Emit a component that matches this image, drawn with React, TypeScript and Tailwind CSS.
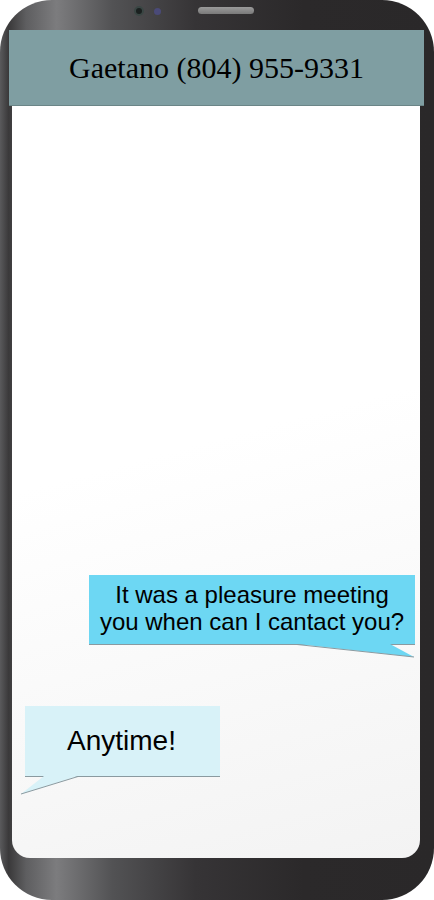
export default function App() {
  return (
    <div className="w-[434px] h-[900px] bg-white overflow-hidden">
      <div className="relative w-[434px] h-[900px] rounded-[52px] bg-[linear-gradient(to_right,#5a5a5c_0%,#3a393a_2%,#5e5e60_6%,#7c7c7e_13%,#525254_26%,#363436_45%,#2b292a_70%,#2a2829_100%)] flex flex-col pb-[42px]">
        {/* notch: camera + speaker */}
        <div className="h-[30px] flex items-start pt-[6px]">
          <div className="ml-[134px] w-[10px] h-[10px] rounded-full bg-[#1a201f] border-2 border-[#3a4644]" />
          <div className="ml-[10px] mt-[2px] w-[7px] h-[7px] rounded-full bg-[#4a4a78]" />
          <div className="ml-[37px] mt-[1px] w-[56px] h-[7px] rounded-full bg-[linear-gradient(to_bottom,#9a9a9a,#7a7a7a)]" />
        </div>

        {/* header */}
        <div className="ml-[9px] mr-[10px] h-[76px] bg-[#7f9ea2] border-b border-[#6b8587] flex items-center justify-center pt-[1px]">
          <span className="font-['Liberation_Serif',serif] text-[30px] text-black leading-none">
            Gaetano (804) 955-9331
          </span>
        </div>

        {/* screen */}
        <div className="ml-[12px] mr-[14px] flex-1 rounded-b-[18px] bg-[linear-gradient(165deg,#ffffff_45%,#f3f3f3_100%)] flex flex-col justify-end pb-[81px] font-['Liberation_Sans',Arial,sans-serif]">
          <div className="relative self-end mr-[5px] w-[326px] h-[70px] bg-[#6dd7f3] border-b border-[#8a9aa0] flex flex-col items-center justify-center pb-[3px] text-[24px] leading-[27px] text-black">
            <span>It was a pleasure meeting</span>
            <span>you when can I cantact you?</span>
            <svg className="absolute left-0 top-[69px]" width="326" height="16" viewBox="0 0 326 16">
              <polygon points="208,0 325,13 301,0" fill="#6dd7f3" />
              <line x1="208" y1="0.5" x2="325" y2="13" stroke="#8a9aa0" strokeWidth="1" />
            </svg>
          </div>

          <div className="relative self-start ml-[13px] mt-[61px] w-[195px] h-[71px] bg-[#d8f2f8] border-b border-[#8a9aa0] flex items-center justify-center text-[28px] text-black">
            <span className="-mt-[1px] -ml-[2px]">Anytime!</span>
            <svg className="absolute left-[-5px] top-[70px]" width="60" height="20" viewBox="0 0 60 20">
              <polygon points="24,0 1,18 58,0" fill="#d8f2f8" />
              <line x1="58" y1="0.5" x2="1" y2="18" stroke="#8a9aa0" strokeWidth="1" />
            </svg>
          </div>
        </div>
      </div>
    </div>
  );
}
